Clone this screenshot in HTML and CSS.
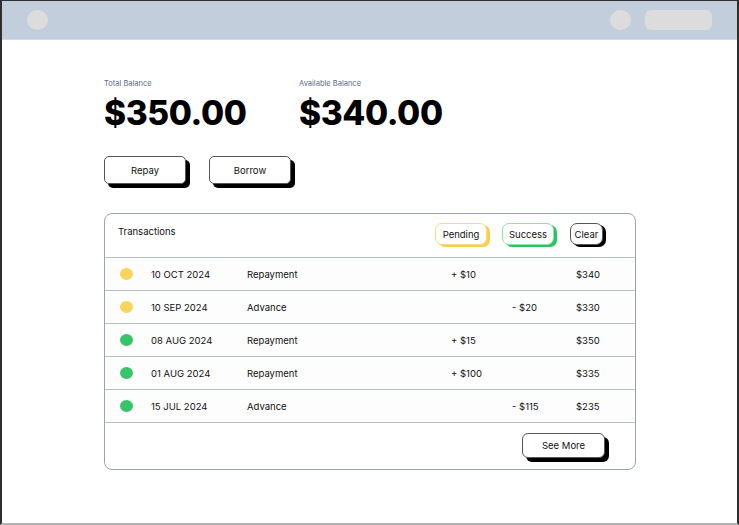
FILE: index.html
```html
<!DOCTYPE html>
<html>
<head>
<meta charset="utf-8">
<link rel="stylesheet" href="styles.css">
</head>
<body>
<div class="window">
  <header class="topbar">
    <span class="dot-ph"></span>
    <span class="spacer"></span>
    <span class="dot-ph"></span>
    <span class="pill-ph"></span>
  </header>
  <main class="content">
    <section class="balances">
      <div class="balance">
        <div class="label">Total Balance</div>
        <div class="amount">$350.00</div>
      </div>
      <div class="balance">
        <div class="label">Available Balance</div>
        <div class="amount">$340.00</div>
      </div>
    </section>
    <section class="actions">
      <button class="btn">Repay</button>
      <button class="btn">Borrow</button>
    </section>
    <section class="card">
      <div class="card-head">
        <div class="title">Transactions</div>
        <div class="filters">
          <button class="chip chip-pending">Pending</button>
          <button class="chip chip-success">Success</button>
          <button class="chip chip-clear">Clear</button>
        </div>
      </div>
      <div class="row">
        <span class="status pending"></span><span>10 OCT 2024</span><span>Repayment</span><span>+ $10</span><span></span><span>$340</span>
      </div>
      <div class="row">
        <span class="status pending"></span><span>10 SEP 2024</span><span>Advance</span><span></span><span>- $20</span><span>$330</span>
      </div>
      <div class="row">
        <span class="status success"></span><span>08 AUG 2024</span><span>Repayment</span><span>+ $15</span><span></span><span>$350</span>
      </div>
      <div class="row">
        <span class="status success"></span><span>01 AUG 2024</span><span>Repayment</span><span>+ $100</span><span></span><span>$335</span>
      </div>
      <div class="row">
        <span class="status success"></span><span>15 JUL 2024</span><span>Advance</span><span></span><span>- $115</span><span>$235</span>
      </div>
      <div class="card-foot">
        <button class="btn btn-more">See More</button>
      </div>
    </section>
  </main>
</div>
</body>
</html>
```
FILE: styles.css
```css
* { box-sizing: border-box; }
html, body { margin: 0; padding: 0; background: #fff; }
body { font-family: Inter, "Noto Sans", sans-serif; color: #111; }

.window {
  width: 739px;
  height: 525px;
  border-top: 1px solid #2e2e2e;
  border-left: 2px solid #2e2e2e;
  border-right: 2px solid #2e2e2e;
  border-bottom: 2px solid #b3b3b3;
  display: flex;
  flex-direction: column;
  overflow: hidden;
}

.topbar {
  height: 39px;
  background: #c3cedc;
  border-bottom: 1px solid #d3dbe6;
  display: flex;
  align-items: center;
  padding: 0 25px 0 25px;
  flex-shrink: 0;
}
.dot-ph {
  width: 21px; height: 20px; border-radius: 50%;
  background: #dcdcdc;
}
.spacer { flex: 1; }
.pill-ph {
  width: 67px; height: 20px; border-radius: 6px;
  background: #dcdcdc;
  margin-left: 14px;
}

.content { padding: 39px 0 0 102px; }

.balances { display: flex; gap: 53px; }
.balance { width: 142px; }
.label { font-size: 7.5px; color: #5b6b86; line-height: 10px; }
.amount {
  font-size: 33.5px; font-weight: 800; line-height: 42px;
  color: #000; letter-spacing: -0.4px; margin-top: 3px; white-space: nowrap;
}

.actions { display: flex; gap: 23px; margin-top: 22px; }
.btn {
  font-family: inherit;
  width: 82px; height: 28px;
  background: #fff;
  border: 1px solid #555;
  border-radius: 5px;
  box-shadow: 4px 4px 0 #000;
  font-size: 9.5px; color: #111;
  padding: 0;
}

.card {
  margin-top: 29px;
  width: 532px;
  border: 1px solid #9aa2b3;
  border-radius: 8px;
  overflow: hidden;
}
.card-head {
  height: 44px;
  display: flex; align-items: center; justify-content: space-between;
  padding: 0 32px 0 13px;
  border-bottom: 1px solid #b9c0cc;
}
.title { font-size: 9.5px; margin-top: -8px; }
.filters { display: flex; gap: 15px; margin-top: -3px; }
.chip {
  font-family: inherit; font-size: 9.5px; color: #111;
  height: 22px; padding: 0;
  background: #fff; border-radius: 7px;
}
.chip-pending { border: 1px solid #f9dc87; box-shadow: 3px 2px 0 #f8cf4c; width: 52px; margin-left: -2px; }
.chip-success { border: 1px solid #8fe0ab; box-shadow: 3px 2px 0 #27c55e; width: 52px; }
.chip-clear { border: 1px solid #555; box-shadow: 3px 2px 0 #000; width: 33px; margin-left: 1px; }

.row {
  height: 33px;
  display: grid;
  grid-template-columns: 31px 96px 204px 61px 64px auto;
  align-items: center;
  padding-left: 15px;
  font-size: 9.5px;
  background: #fdfdfd;
  border-bottom: 1px solid #b9c0cc;
}
.status { width: 13px; height: 12px; border-radius: 50%; }
.status.pending { background: #f8d45c; }
.status.success { background: #38c46a; }

.card-foot {
  height: 46px;
  display: flex; justify-content: flex-end; align-items: center;
  padding-right: 30px;
}
.btn-more { width: 83px; height: 25px; border-radius: 6px; margin-bottom: 2px; }
```
